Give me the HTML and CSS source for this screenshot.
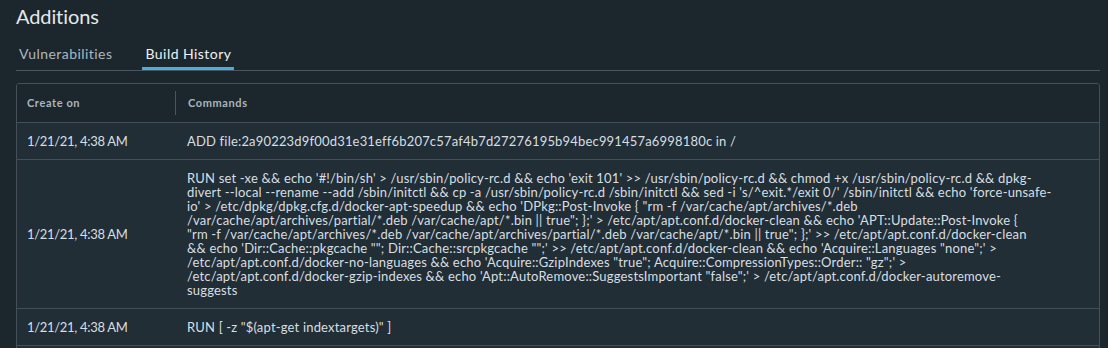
FILE: index.html
```html
<!DOCTYPE html>
<html lang="en">
<head>
<meta charset="utf-8">
<title>Additions</title>
<link rel="stylesheet" href="styles.css">
</head>
<body>
<div class="page">
  <h2 class="title">Additions</h2>
  <ul class="tabs">
    <li class="tab">Vulnerabilities</li>
    <li class="tab active">Build History</li>
  </ul>
  <div class="grid">
    <div class="row head">
      <div class="cell c1">Create on</div>
      <div class="cell c2">Commands</div>
    </div>
    <div class="row">
      <div class="cell c1 date">1/21/21, 4:38 AM</div>
      <div class="cell c2">ADD file:2a90223d9f00d31e31eff6b207c57af4b7d27276195b94bec991457a6998180c in /</div>
    </div>
    <div class="row">
      <div class="cell c1 date">1/21/21, 4:38 AM</div>
      <div class="cell c2 multi">RUN set -xe &amp;&amp; echo '#!/bin/sh' &gt; /usr/sbin/policy-rc.d &amp;&amp; echo 'exit 101' &gt;&gt; /usr/sbin/policy-rc.d &amp;&amp; chmod +x /usr/sbin/policy-rc.d &amp;&amp; dpkg-<br>divert --local --rename --add /sbin/initctl &amp;&amp; cp -a /usr/sbin/policy-rc.d /sbin/initctl &amp;&amp; sed -i 's/^exit.*/exit 0/' /sbin/initctl &amp;&amp; echo 'force-unsafe-<br>io' &gt; /etc/dpkg/dpkg.cfg.d/docker-apt-speedup &amp;&amp; echo 'DPkg::Post-Invoke { "rm -f /var/cache/apt/archives/*.deb<br>/var/cache/apt/archives/partial/*.deb /var/cache/apt/*.bin || true"; };' &gt; /etc/apt/apt.conf.d/docker-clean &amp;&amp; echo 'APT::Update::Post-Invoke {<br>"rm -f /var/cache/apt/archives/*.deb /var/cache/apt/archives/partial/*.deb /var/cache/apt/*.bin || true"; };' &gt;&gt; /etc/apt/apt.conf.d/docker-clean<br>&amp;&amp; echo 'Dir::Cache::pkgcache ""; Dir::Cache::srcpkgcache "";' &gt;&gt; /etc/apt/apt.conf.d/docker-clean &amp;&amp; echo 'Acquire::Languages "none";' &gt;<br>/etc/apt/apt.conf.d/docker-no-languages &amp;&amp; echo 'Acquire::GzipIndexes "true"; Acquire::CompressionTypes::Order:: "gz";' &gt;<br>/etc/apt/apt.conf.d/docker-gzip-indexes &amp;&amp; echo 'Apt::AutoRemove::SuggestsImportant "false";' &gt; /etc/apt/apt.conf.d/docker-autoremove-<br>suggests</div>
    </div>
    <div class="row">
      <div class="cell c1 date">1/21/21, 4:38 AM</div>
      <div class="cell c2">RUN [ -z "$(apt-get indextargets)" ]</div>
    </div>
    <div class="row tail"></div>
  </div>
</div>
</body>
</html>
```

FILE: styles.css
```css
* { box-sizing: border-box; }
html, body {
  margin: 0;
  padding: 0;
  background: #1c262d;
  overflow: hidden;
}
body {
  font-family: Lato, "Open Sans", sans-serif;
  color: #d5dbdf;
}
.page {
  padding: 4px 8px 0 16px;
}
.title {
  margin: 0;
  font-size: 20px;
  line-height: 24px;
  font-weight: 400;
  color: #e4e9ec;
  letter-spacing: -0.1px;
}
.tabs {
  list-style: none;
  margin: 8px 0 0 0;
  padding: 0;
  display: flex;
  gap: 27px;
  border-bottom: 1px solid #4b5760;
}
.tab {
  padding: 6px 3px 1px;
  line-height: 24px;
  font-size: 14px;
  letter-spacing: 0.45px;
  color: #acb8c0;
  border-bottom: 3px solid transparent;
}
.tab.active {
  color: #eef1f3;
  border-bottom-color: #4aaed9;
}
.grid {
  margin-top: 12px;
  border: 1px solid #444f57;
  border-radius: 3px;
  overflow: hidden;
}
.row {
  display: grid;
  grid-template-columns: 158px 1fr;
  background: #212e36;
  border-top: 1px solid #444f57;
  font-size: 13px;
  line-height: 14px;
  letter-spacing: 0.18px;
  color: #d8dee2;
}
.row.head {
  border-top: none;
  background: #1c262d;
  padding: 7px 0;
  font-size: 11px;
  font-weight: 700;
  color: #aab5bd;
  letter-spacing: 0.6px;
}
.row.tail {
  height: 37px;
}
.cell {
  padding: 11px 12px 11px 10px;
  display: flex;
  align-items: center;
}
.cell.date {
  letter-spacing: -0.3px;
}
.row.head .cell {
  padding: 0 10px;
  height: 24px;
}
.row.head .c2 {
  border-left: 1px solid #49555d;
  padding-left: 12px;
}
.c2 { padding-left: 12px; }
.multi {
  display: block;
  white-space: nowrap;
}
```
